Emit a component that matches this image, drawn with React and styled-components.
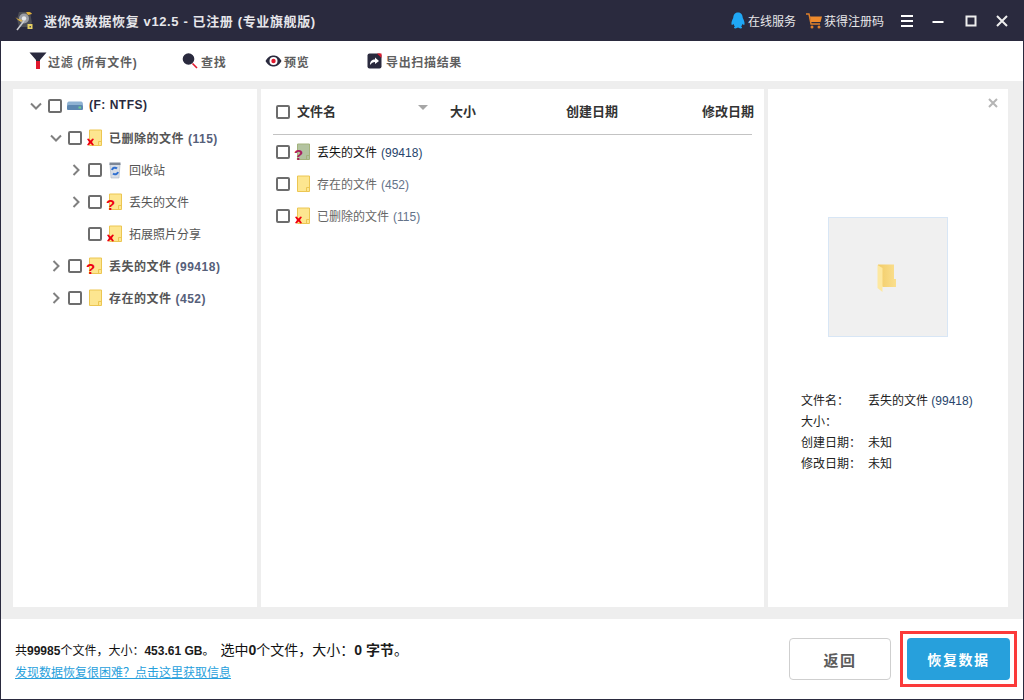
import React from "react";
import styled, { createGlobalStyle } from "styled-components";

const Global = createGlobalStyle`
  html, body { margin: 0; padding: 0; background: #fff; }
  body { font-family: "Liberation Sans", "Noto Sans CJK SC", sans-serif; font-size: 12px; }
  * { box-sizing: border-box; }
`;

const Window = styled.div`
  width: 1024px; height: 700px; display: flex; flex-direction: column;
  border: 1px solid #2a2a3e; border-top: 0; background: #fff; overflow: hidden;
`;
const TitleBar = styled.header`
  height: 41px; margin: 0 -1px; background: #2a2a3e; color: #f2f2f2; display: flex; align-items: center; padding-left: 15px; flex: none;
`;
const AppLogo = styled.svg`width: 18px; height: 20px; margin-right: 11px; flex: none;`;
const AppTitle = styled.div`font-size: 13px; font-weight: 700; color: #e6e6ea; letter-spacing: 0.62px; flex: 1;`;
const TitleLink = styled.div`
  display: flex; align-items: center; gap: 2px; color: #e8e8ea; font-size: 12px; width: ${p => p.$w}px; flex: none;
`;
const WinBtn = styled.svg`width: 14px; height: 14px; flex: none; margin-right: ${p => p.$mr}px;`;

const Toolbar = styled.nav`height: 40px; display: flex; align-items: center; padding-left: 28px; flex: none; background: #fff;`;
const ToolItem = styled.div`
  width: ${p => p.$w}px; flex: none; display: flex; align-items: center; gap: ${p => p.$gap || 2}px;
  color: #5f5f5f; font-weight: 700; font-size: 12px; letter-spacing: 0.67px; white-space: nowrap;
`;

const Workspace = styled.main`
  flex: 1; min-height: 0; background: #eeeeee; padding: 8px 15px 12px 12px; display: flex; gap: 4px;
`;
const Panel = styled.section`background: #fff; width: ${p => p.$w}px; flex: none; position: relative;`;
const TreePanel = styled(Panel)`padding-top: 1px;`;

const TreeRow = styled.div`
  height: 32px; display: flex; align-items: center; padding-left: ${p => p.$indent}px;
  color: ${p => (p.$root ? "#2a2a3e" : "#555")}; font-weight: ${p => (p.$bold ? 700 : 400)};
  letter-spacing: ${p => (p.$bold ? "0.5px" : "0")};
`;
const Label = styled.span`margin-bottom: 2px; white-space: nowrap;`;
const ChevronSlot = styled.svg`width: 12px; height: 12px; flex: none; margin-right: 6px;`;
const Check = styled.span`
  width: 14px; height: 14px; flex: none; border: 2px solid #6d6d6d; border-radius: 2px; display: block; background: #fff;
`;
const IconSlot = styled.svg`width: 18px; height: 18px; flex: none; margin-left: ${p => p.$ml ?? 4}px; margin-right: ${p => p.$mr ?? 4}px; overflow: visible;`;
const Count = styled.span`color: #56607a; margin-left: 4px;`;

const ListPanelInner = styled.div`padding: 0 12px;`;
const ListHead = styled.div`
  height: 46px; display: flex; align-items: center; border-bottom: 1px solid #c3c3c3; padding-left: 3px; margin-bottom: 1px;
  font-weight: 700; font-size: 13px; color: #333; position: relative;
`;
const HeadCell = styled.div`width: ${p => p.$w}px; flex: none; display: flex; align-items: center; white-space: nowrap;`;
const HeadLabel = styled.span`margin-left: ${p => p.$ml || 0}px; margin-bottom: 2px;`;
const SortArrow = styled.span`
  position: absolute; left: 145px; top: 16px; width: 0; height: 0;
  border-left: 5px solid transparent; border-right: 5px solid transparent; border-top: 5px solid #a6a6a6;
`;
const ListRow = styled.div`
  height: 32px; display: flex; align-items: center; padding-left: 3px;
  color: ${p => (p.$active ? "#111" : "#666")};
`;
const RowCount = styled.span`color: ${p => (p.$active ? "#27456c" : "#64738a")}; margin-left: 4px;`;

const CloseX = styled.svg`position: absolute; top: 9px; right: 10px; width: 10px; height: 10px;`;
const Thumb = styled.div`
  width: 120px; height: 120px; margin: 128px 0 0 60px; background: #f0f0f0; border: 1px solid #d8e6f5; padding: 2px 2px 0 0;
  display: flex; align-items: center; justify-content: center;
`;
const Info = styled.dl`margin: 52px 0 0 33px; color: #222; display: grid; grid-template-columns: 67px auto; grid-auto-rows: 21px; align-items: center;`;
const InfoKey = styled.dt`margin: 0;`;
const InfoVal = styled.dd`margin: 0;`;
const InfoNum = styled.span`color: #27456c;`;

const Footer = styled.footer`height: 80px; flex: none; display: flex; align-items: center; padding: 0 6px 0 14px; background: #fff;`;
const Summary = styled.div`flex: 1; display: flex; flex-direction: column; gap: 6px; margin-top: 5px;`;
const SummaryLine = styled.div`color: #111; line-height: 16px; white-space: nowrap;`;
const Strong = styled.b`font-weight: 700; color: #1b1b1b;`;
const Sel = styled.span`font-size: 14px; margin-left: 6px;`;
const HelpLink = styled.a`color: #27a0dc; text-decoration: underline; line-height: 16px;`;
const BackBtn = styled.button`
  width: 102px; height: 42px; border: 1px solid #cfcfcf; border-radius: 4px; background: #fff; color: #5c5c5c;
  font: 700 15px "Liberation Sans", "Noto Sans CJK SC", sans-serif; letter-spacing: 1.5px; margin-right: 9px;
`;
const Highlight = styled.div`border: 3px solid #fb3a3a; padding: 4px; width: 117px; height: 56px; flex: none; display: flex;`;
const RecoverBtn = styled.button`
  flex: 1; border: 0; border-radius: 4px; background: #27a0dc; color: #fff;
  font: 700 14px "Liberation Sans", "Noto Sans CJK SC", sans-serif; letter-spacing: 1.6px;
`;

const Chevron = ({ dir }) => (
  <ChevronSlot viewBox="0 0 12 12">
    {dir === "down" && <path d="M1 3.5 L6 8.5 L11 3.5" fill="none" stroke="#808080" strokeWidth="2" />}
    {dir === "right" && <path d="M3.5 1 L8.5 6 L3.5 11" fill="none" stroke="#808080" strokeWidth="2" />}
  </ChevronSlot>
);

const Badge = ({ kind, green }) =>
  kind === "x" ? (
    <path d="M1 10 L2.5 9.5 L4.5 11.5 L6.5 9.5 L8 10 L6 13 L8 16 L6.5 16.5 L4.5 14.5 L2.5 16.5 L1 16 L3 13 Z" fill="#ee0010" />
  ) : kind === "q" ? (
    <text x="0" y="16.5" fontFamily="Liberation Sans" fontWeight="700" fontSize="15" fill={green ? "#a8205a" : "#ee0010"}>?</text>
  ) : null;

const FileIcon = ({ badge, green, ml, mr }) => (
  <IconSlot viewBox="0 0 18 18" $ml={ml} $mr={mr}>
    <path d="M3.5 1 H15.5 V16.5 H3.5 Z" fill={green ? "#b3c3a0" : "#fde690"} stroke={green ? "#a3b37c" : "#ecc652"} />
    <path d="M12.5 16.5 V12.5 H15.5" fill="none" stroke={green ? "#a3b37c" : "#ecc652"} />
    <Badge kind={badge} green={green} />
  </IconSlot>
);

const DriveIcon = () => (
  <IconSlot viewBox="0 0 18 18" $ml={4} $mr={5}>
    <path d="M3 4.5 H15 C16.5 4.5 17 6 17 8 V11 C17 12.5 16.5 13 15 13 H3 C1.5 13 1 12.5 1 11 V8 C1 6 1.5 4.5 3 4.5 Z" fill="#8fb2d2" />
    <rect x="1" y="8" width="16" height="5" rx="1.5" fill="#5d87b0" />
    <rect x="12.5" y="9.5" width="2.5" height="2" fill="#6fd08a" />
  </IconSlot>
);

const BinIcon = () => (
  <IconSlot viewBox="0 0 18 18" $ml={4} $mr={5}>
    <path d="M4 3 H14 L13 17 H5 Z" fill="#d7dde6" stroke="#a9b3c0" strokeWidth="0.6" />
    <path d="M3.5 1.5 H14.5 V4 H3.5 Z" fill="#7d8796" />
    <path d="M6 9 A3 3 0 0 1 11 7.5 M12 11 A3 3 0 0 1 7 12.5" fill="none" stroke="#2f6fd0" strokeWidth="2" />
  </IconSlot>
);

export default function App() {
  return (
    <Window>
      <Global />
      <TitleBar>
        <AppLogo viewBox="0 0 18 20">
          <path d="M4 1 H15 L17 12 L13 16 H4 L2 8 Z" fill="#4b4d55" />
          <circle cx="9" cy="7.5" r="5" fill="#9b9da4" />
          <circle cx="9" cy="7.5" r="2.2" fill="#e6e7ea" />
          <path d="M0.5 6 C2 9 5 11 8 10.5 L6 8.5 C4 8.5 2.5 8 0.5 6 Z" fill="#e2b23c" />
          <path d="M17 3 C16 1 13.5 0.5 11 1.5 L13 4 C14.5 3.5 15.5 3.5 17 3 Z" fill="#e2b23c" />
          <path d="M2 19 L9 10" stroke="#c9cbd0" strokeWidth="1.6" />
          <rect x="12.5" y="13" width="5" height="5" fill="#e6cf63" />
          <rect x="14.5" y="15" width="1.5" height="1.5" fill="#4b4d55" />
        </AppLogo>
        <AppTitle>迷你兔数据恢复 v12.5 - 已注册 (专业旗舰版)</AppTitle>
        <TitleLink $w={76}>
          <svg width="16" height="17" viewBox="0 0 16 17">
            <path d="M8 0.5 C11.5 0.5 12.6 3 12.8 6 C13.5 7.5 15 10 14.5 12.5 C14 13.5 13 12.5 12.5 11.8 C12.3 13 11.8 14 11 14.5 C12.5 15 12.5 16.5 10.5 16.5 C9.5 16.5 8.7 16 8 15.6 C7.3 16 6.5 16.5 5.5 16.5 C3.5 16.5 3.5 15 5 14.5 C4.2 14 3.7 13 3.5 11.8 C3 12.5 2 13.5 1.5 12.5 C1 10 2.5 7.5 3.2 6 C3.4 3 4.5 0.5 8 0.5 Z" fill="#1fa7f5" />
          </svg>
          在线服务
        </TitleLink>
        <TitleLink $w={94}>
          <svg width="16" height="16" viewBox="0 0 16 16">
            <path d="M0 1 H3 L5 11 H14" fill="none" stroke="#e0802a" strokeWidth="1.4" />
            <path d="M4 3.5 H16 L14.5 9 H5 Z" fill="#ee8a2c" />
            <circle cx="6" cy="14" r="1.5" fill="#e0802a" />
            <circle cx="13" cy="14" r="1.5" fill="#e0802a" />
          </svg>
          获得注册码
        </TitleLink>
        <WinBtn viewBox="0 0 14 14" $mr={17}><path d="M1 2 H13 M1 7 H13 M1 12 H13" stroke="#fff" strokeWidth="2" /></WinBtn>
        <WinBtn viewBox="0 0 14 14" $mr={19}><path d="M1.5 8 H12.5" stroke="#fff" strokeWidth="2" /></WinBtn>
        <WinBtn viewBox="0 0 14 14" $mr={17}><rect x="2.5" y="2.5" width="9" height="9" fill="none" stroke="#eee" strokeWidth="2" /></WinBtn>
        <WinBtn viewBox="0 0 14 14" $mr={15}><path d="M2 2 L12 12 M12 2 L2 12" stroke="#eee" strokeWidth="2" /></WinBtn>
      </TitleBar>

      <Toolbar>
        <ToolItem $w={153} $gap={1}>
          <svg width="18" height="18" viewBox="0 0 18 18">
            <path d="M0.5 0.5 H17.5 L11 8 V9 H7 V8 Z" fill="#2a2a3e" />
            <rect x="7" y="9" width="4" height="8" fill="#e0182d" />
          </svg>
          过滤 (所有文件)
        </ToolItem>
        <ToolItem $w={83} $gap={3}>
          <svg width="16" height="16" viewBox="0 0 16 16">
            <circle cx="6.5" cy="6" r="5.8" fill="#2a2a3e" />
            <path d="M10.5 10.5 L15 15" stroke="#e0182d" strokeWidth="1.6" />
          </svg>
          查找
        </ToolItem>
        <ToolItem $w={102} $gap={2}>
          <svg width="17" height="12" viewBox="0 0 17 12">
            <path d="M0.5 6 C3 1.5 6 0.5 8.5 0.5 C11 0.5 14 1.5 16.5 6 C14 10.5 11 11.5 8.5 11.5 C6 11.5 3 10.5 0.5 6 Z" fill="#2a2a3e" />
            <circle cx="8.5" cy="6" r="4" fill="#fff" />
            <circle cx="8.5" cy="6" r="2.2" fill="#e0182d" />
          </svg>
          预览
        </ToolItem>
        <ToolItem $w={120} $gap={4}>
          <svg width="15" height="16" viewBox="0 0 15 16">
            <rect x="0.5" y="0.5" width="14" height="15" rx="2" fill="#2a2a3e" />
            <path d="M10 0.5 H14.5 V5 Z" fill="#e0182d" />
            <path d="M3 12 C3 8 5 6.5 8 6.5 V4.5 L12 8 L8 11 V9 C6 9 4.5 10 3 12 Z" fill="#fff" />
          </svg>
          导出扫描结果
        </ToolItem>
      </Toolbar>

      <Workspace>
        <TreePanel $w={244}>
          <TreeRow $indent={17} $bold $root>
            <Chevron dir="down" /><Check /><DriveIcon /><Label>(F: NTFS)</Label>
          </TreeRow>
          <TreeRow $indent={37} $bold>
            <Chevron dir="down" /><Check /><FileIcon badge="x" mr={5} /><Label>已删除的文件<Count>(115)</Count></Label>
          </TreeRow>
          <TreeRow $indent={57}>
            <Chevron dir="right" /><Check /><BinIcon /><Label>回收站</Label>
          </TreeRow>
          <TreeRow $indent={57}>
            <Chevron dir="right" /><Check /><FileIcon badge="q" mr={5} /><Label>丢失的文件</Label>
          </TreeRow>
          <TreeRow $indent={57}>
            <Chevron /><Check /><FileIcon badge="x" mr={5} /><Label>拓展照片分享</Label>
          </TreeRow>
          <TreeRow $indent={37} $bold>
            <Chevron dir="right" /><Check /><FileIcon badge="q" mr={5} /><Label>丢失的文件<Count>(99418)</Count></Label>
          </TreeRow>
          <TreeRow $indent={37} $bold>
            <Chevron dir="right" /><Check /><FileIcon mr={5} /><Label>存在的文件<Count>(452)</Count></Label>
          </TreeRow>
        </TreePanel>

        <Panel $w={503}>
          <ListPanelInner>
            <ListHead>
              <HeadCell $w={174}><Check /><HeadLabel $ml={7}>文件名</HeadLabel></HeadCell>
              <SortArrow />
              <HeadCell $w={116}><HeadLabel>大小</HeadLabel></HeadCell>
              <HeadCell $w={136}><HeadLabel>创建日期</HeadLabel></HeadCell>
              <HeadCell $w={50}><HeadLabel>修改日期</HeadLabel></HeadCell>
            </ListHead>
            <ListRow $active>
              <Check /><FileIcon badge="q" green ml={4} mr={5} /><Label>丢失的文件<RowCount $active>(99418)</RowCount></Label>
            </ListRow>
            <ListRow>
              <Check /><FileIcon ml={4} mr={5} /><Label>存在的文件<RowCount>(452)</RowCount></Label>
            </ListRow>
            <ListRow>
              <Check /><FileIcon badge="x" ml={4} mr={5} /><Label>已删除的文件<RowCount>(115)</RowCount></Label>
            </ListRow>
          </ListPanelInner>
        </Panel>

        <Panel $w={240}>
          <CloseX viewBox="0 0 10 10"><path d="M1 1 L9 9 M9 1 L1 9" stroke="#b5b5b5" strokeWidth="2" /></CloseX>
          <Thumb>
            <svg width="20" height="28" viewBox="0 0 20 28">
              <defs>
                <linearGradient id="folderBack" x1="0" x2="1" y1="0" y2="0">
                  <stop offset="0" stopColor="#f2cc68" />
                  <stop offset="1" stopColor="#fadf8e" />
                </linearGradient>
              </defs>
              <path d="M1 0.5 H17 V15 H19 V23 H6 L1 20 Z" fill="url(#folderBack)" />
              <path d="M0.5 1 L5.5 4 V28 L0.5 24 Z" fill="#fde8a0" />
            </svg>
          </Thumb>
          <Info>
            <InfoKey>文件名：</InfoKey><InfoVal>丢失的文件 <InfoNum>(99418)</InfoNum></InfoVal>
            <InfoKey>大小：</InfoKey><InfoVal />
            <InfoKey>创建日期：</InfoKey><InfoVal>未知</InfoVal>
            <InfoKey>修改日期：</InfoKey><InfoVal>未知</InfoVal>
          </Info>
        </Panel>
      </Workspace>

      <Footer>
        <Summary>
          <SummaryLine>
            共<Strong>99985</Strong>个文件，大小：<Strong>453.61 GB</Strong>。
            <Sel>选中<Strong>0</Strong>个文件，大小：<Strong>0 字节</Strong>。</Sel>
          </SummaryLine>
          <HelpLink>发现数据恢复很困难？点击这里获取信息</HelpLink>
        </Summary>
        <BackBtn>返回</BackBtn>
        <Highlight><RecoverBtn>恢复数据</RecoverBtn></Highlight>
      </Footer>
    </Window>
  );
}
